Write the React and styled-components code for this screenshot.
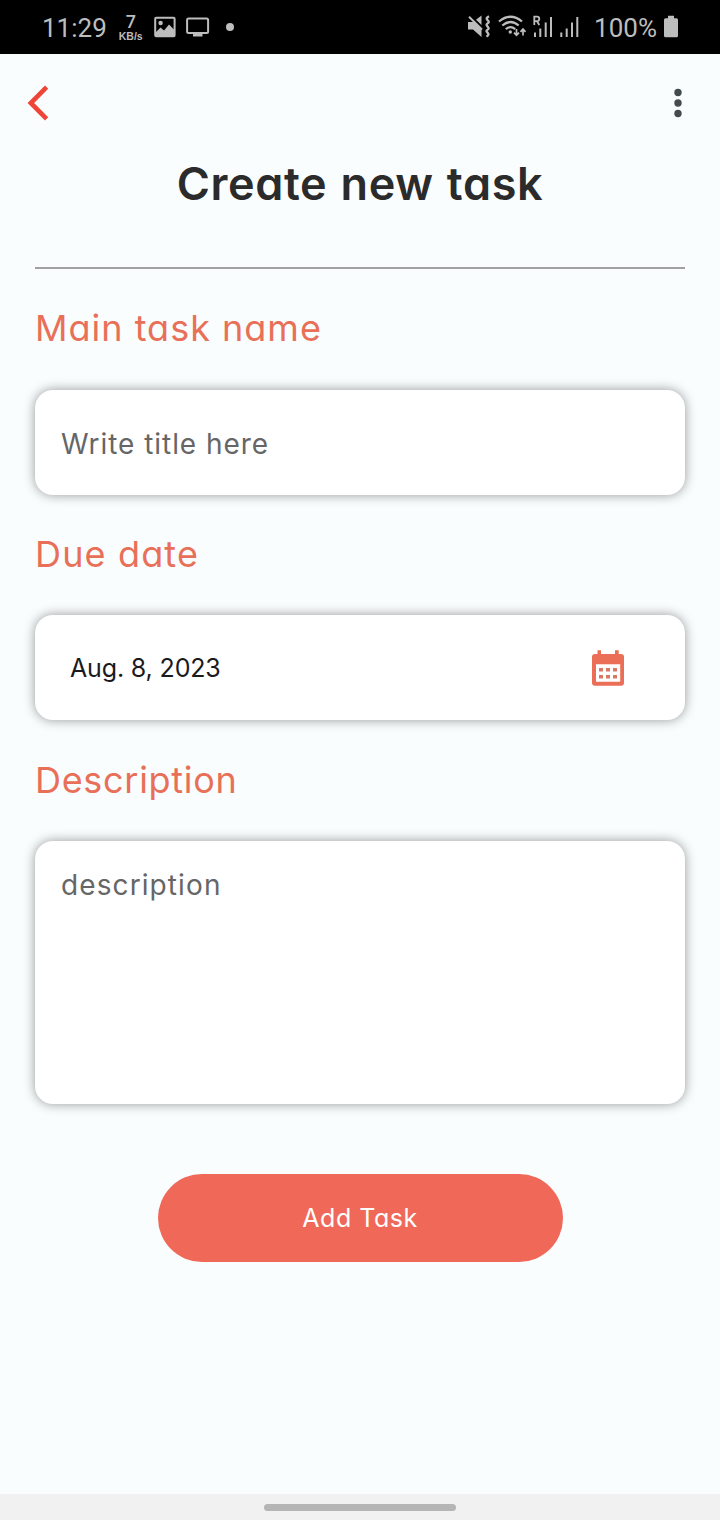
import React from "react";
import styled, { createGlobalStyle } from "styled-components";

const GlobalStyle = createGlobalStyle`
  * { box-sizing: border-box; }
  html, body { margin: 0; padding: 0; background: #f9fdfe; }
  body { font-family: Inter, "Noto Sans", sans-serif; font-feature-settings: "cv11"; }
  svg { display: block; flex: none; }
`;

const Screen = styled.div`
  width: 720px;
  height: 1520px;
  display: flex;
  flex-direction: column;
  background: #f9fdfe;
  overflow: hidden;
`;

const StatusBar = styled.header`
  height: 54px;
  flex: none;
  display: flex;
  align-items: center;
  justify-content: space-between;
  padding: 0 41px 0 42px;
  background: #000;
  color: #bdbdbd;
  font-family: Roboto, sans-serif;
`;

const StatusGroup = styled.div`
  display: flex;
  align-items: center;
  height: 54px;
`;

const StatusText = styled.span`
  font-size: 26px;
  line-height: 54px;
  padding-top: 2px;
  margin-right: ${(p) => p.$after || 0}px;
`;

const NetSpeed = styled.div`
  display: flex;
  flex-direction: column;
  align-items: center;
  width: 26px;
  margin-right: 10px;
  padding-top: 1px;
`;

const SpeedValue = styled.span`
  font: 500 18px/15px Roboto, sans-serif;
`;

const SpeedUnit = styled.span`
  margin-top: 2px;
  font: 700 10.5px/11px "Liberation Sans", sans-serif;
`;

const Glyph = styled.svg`
  margin-right: ${(p) => p.$after || 0}px;
`;

const TopBar = styled.nav`
  height: 98px;
  flex: none;
  display: flex;
  align-items: center;
  justify-content: space-between;
  padding: 0 36px 0 26px;
`;

const IconButton = styled.button`
  display: flex;
  border: 0;
  padding: 0;
  background: none;
`;

const Title = styled.h1`
  margin: 0;
  font-size: 45px;
  line-height: 63px;
  font-weight: 560;
  letter-spacing: 0.65px;
  word-spacing: 1.2px;
  text-align: center;
  color: #2b2b2b;
`;

const Divider = styled.hr`
  width: 650px;
  height: 2px;
  margin: 52px auto 0;
  border: 0;
  flex: none;
  background: #a0a2a3;
`;

const Form = styled.form`
  display: flex;
  flex-direction: column;
  padding: 0 35px;
`;

const Label = styled.label`
  margin: 39.3px 0 41.4px;
  font-size: 36px;
  line-height: 40px;
  color: #e97058;
  letter-spacing: ${(p) => p.$spacing || 0}px;
`;

const Field = styled.div`
  display: flex;
  align-items: ${(p) => (p.$tall ? "flex-start" : "center")};
  justify-content: space-between;
  height: ${(p) => (p.$tall ? 263 : 105)}px;
  padding: ${(p) => p.$pad};
  border-radius: 18px;
  background: #fff;
  box-shadow: 0 0 12px rgba(0, 0, 0, 0.4);
`;

const Placeholder = styled.span`
  font-size: 28px;
  line-height: 36px;
  font-weight: 370;
  color: #666;
  letter-spacing: ${(p) => p.$spacing || 0}px;
`;

const DateValue = styled.span`
  font-size: 25px;
  line-height: 36px;
  font-weight: 370;
  color: #1a1a1c;
  letter-spacing: -0.15px;
`;

const SubmitButton = styled.button`
  align-self: center;
  width: 405px;
  height: 87.5px;
  margin-top: 70px;
  padding: 0;
  border: 0;
  border-radius: 44px;
  background: #f06857;
  color: #fff;
  font: 370 25px/36px Inter, sans-serif;
  font-feature-settings: "cv11";
  letter-spacing: 0.5px;
`;

const GestureBar = styled.footer`
  height: 26px;
  flex: none;
  margin-top: auto;
  display: flex;
  align-items: center;
  justify-content: center;
  background: #f1f1f1;
`;

const GestureHandle = styled.div`
  width: 192px;
  height: 7px;
  border-radius: 4px;
  background: #b5b5b5;
`;

const ink = "#bdbdbd";

export default function App() {
  return (
    <Screen>
      <GlobalStyle />
      <StatusBar>
        <StatusGroup>
          <StatusText $after={11}>11:29</StatusText>
          <NetSpeed>
            <SpeedValue>7</SpeedValue>
            <SpeedUnit>KB/s</SpeedUnit>
          </NetSpeed>
          <Glyph $after={10} width="22" height="22" viewBox="0 0 22 22">
            <rect x="1.2" y="1.7" width="19.4" height="18.6" rx="1" fill="none" stroke={ink} strokeWidth="2" />
            <circle cx="6.6" cy="7" r="2.2" fill={ink} />
            <path d="M1.5 16.5 6.5 11.5l3.5 3 5-6 5.5 5.5v6.500h-19z" fill={ink} />
          </Glyph>
          <Glyph $after={16} width="24" height="22" viewBox="0 0 24 22">
            <rect x="1.1" y="2.4" width="21" height="14.6" rx="1.5" fill="none" stroke={ink} strokeWidth="2" />
            <path d="M7 17.5h9.500v3H7z" fill={ink} />
          </Glyph>
          <Glyph width="8" height="8" viewBox="0 0 8 8">
            <circle cx="4" cy="4" r="4" fill={ink} />
          </Glyph>
        </StatusGroup>
        <StatusGroup>
          <Glyph $after={7} width="24" height="24" viewBox="467 15 24 24">
            <path d="M468 22h5l8.500-6.500v21.500l-8.500-7.500h-5z" fill={ink} />
            <path d="M468.500 14.500 483 28.500" stroke="#000" strokeWidth="3" />
            <path d="M469 16.800 482 29.500" stroke={ink} strokeWidth="2" />
            <path d="M489 16.200q-3 1.700-2.200 3t1.700 2q.8 1-.8 2.200t-.9 2.100 1.500 1.900q1 1.100-.6 2.200t-1 2.100 1.500 1.900q1 1.200-1.700 3" fill="none" stroke={ink} strokeWidth="2.300" />
          </Glyph>
          <Glyph $after={6} width="29" height="24" viewBox="498 15 29 24">
            <g fill="none" stroke={ink} strokeWidth="2.200">
              <path d="M499 21.500q11.500-9.500 23 0" />
              <path d="M502.300 25.500q8.200-7 16.400 0" />
              <path d="M505.800 29.200q4.700-4 9.400 0" />
              <path d="M516.500 29v6M514 32.600l2.500 2.700 2.500-2.700M523 35.500v-6M520.500 31.800l2.500-2.700 2.500 2.700" strokeWidth="1.700" />
            </g>
            <circle cx="510.300" cy="32" r="1.700" fill={ink} />
          </Glyph>
          <Glyph $after={7} width="20" height="24" viewBox="533 15 20 24">
            <path d="M534.300 25v-8.300h2.700a2.200 2.200 0 0 1 0 4.500h-2.700M537 21.200l2.300 3.800" fill="none" stroke={ink} strokeWidth="1.800" />
            <path d="M534 32.500h2v4.500h-2zM539.300 28.500h2v8.500h-2zM544.700 22.500h2v14.500h-2zM550 17h2v20h-2z" fill={ink} />
          </Glyph>
          <Glyph $after={14} width="20" height="24" viewBox="560 15 20 24">
            <path d="M560.300 32.500h2v4.500h-2zM565.700 28.500h2v8.500h-2zM571 22.500h2v14.500h-2zM576.300 17h2v20h-2z" fill={ink} />
          </Glyph>
          <StatusText $after={7}>100%</StatusText>
          <Glyph width="15" height="24" viewBox="664 15 15 24">
            <path d="M668 15.800h6v2.500h2.500a1.500 1.500 0 0 1 1.500 1.500v16a1.500 1.500 0 0 1-1.500 1.500h-11a1.500 1.500 0 0 1-1.500-1.500v-16a1.500 1.500 0 0 1 1.500-1.500h2.500z" fill={ink} />
          </Glyph>
        </StatusGroup>
      </StatusBar>
      <TopBar>
        <IconButton aria-label="Back">
          <svg width="24" height="36" viewBox="26 85 24 36">
            <path d="M46.600 87.200 30.800 103l15.800 15.800" fill="none" stroke="#ee4538" strokeWidth="4.600" />
          </svg>
        </IconButton>
        <IconButton aria-label="More options">
          <svg width="12" height="30" viewBox="0 0 12 30" fill="#444b4d">
            <circle cx="6" cy="4.500" r="3.700" />
            <circle cx="6" cy="15" r="3.700" />
            <circle cx="6" cy="25.500" r="3.700" />
          </svg>
        </IconButton>
      </TopBar>
      <Title>Create new task</Title>
      <Divider />
      <Form>
        <Label $spacing={1}>Main task name</Label>
        <Field $pad="3px 26px 0">
          <Placeholder $spacing={0.95}>Write title here</Placeholder>
        </Field>
        <Label $spacing={1.15}>Due date</Label>
        <Field $pad="0 60px 0 35px">
          <DateValue>Aug. 8, 2023</DateValue>
          <svg width="34" height="38" viewBox="591 649 34 38">
            <path fill="#eb6e57" fillRule="evenodd" d="M597.500 650.300h3.500v3.700h14v-3.700h3.700v3.700h2.300a3 3 0 0 1 3 3v25.700a3 3 0 0 1-3 3h-26a3 3 0 0 1-3-3v-25.700a3 3 0 0 1 3-3h2.500zM596 664.300v17.400h24.200v-17.400z" />
            <path fill="#d87966" d="M599 668h4v3.500h-4zM606 668h4v3.500h-4zM613 668h4v3.500h-4zM599 675h4v3.500h-4zM606 675h4v3.500h-4zM613 675h4v3.500h-4z" />
          </svg>
        </Field>
        <Label $spacing={0.7}>Description</Label>
        <Field $tall $pad="26px 26px 0">
          <Placeholder $spacing={1.1}>description</Placeholder>
        </Field>
        <SubmitButton type="button">Add Task</SubmitButton>
      </Form>
      <GestureBar>
        <GestureHandle />
      </GestureBar>
    </Screen>
  );
}
